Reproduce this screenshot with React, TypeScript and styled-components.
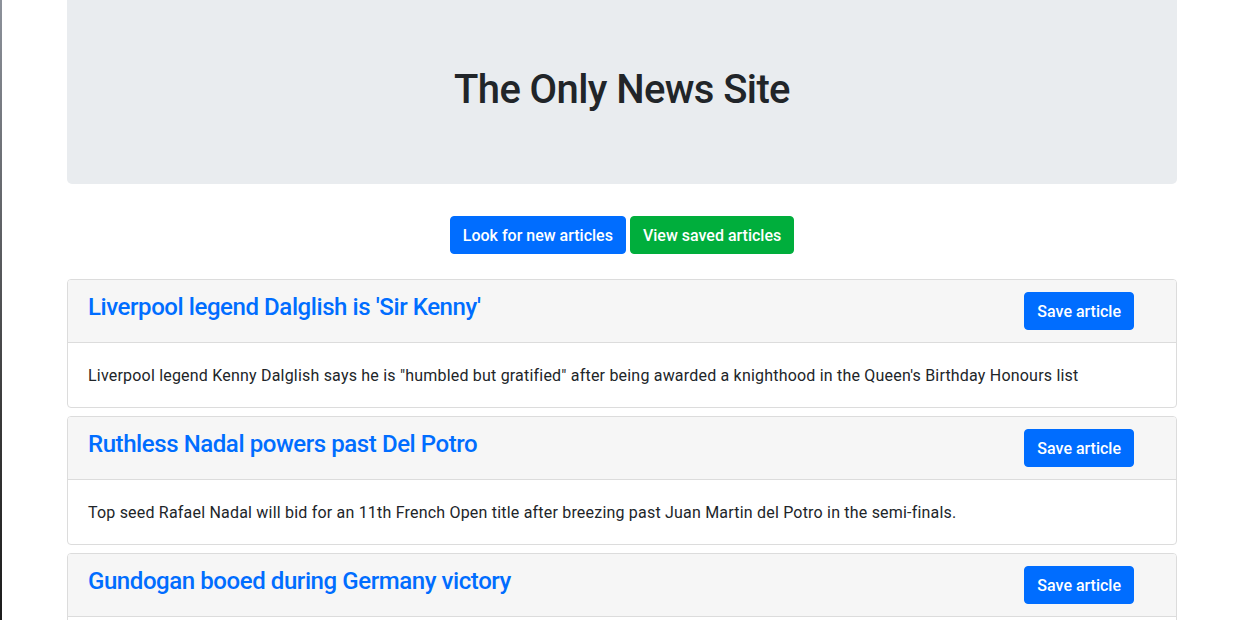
import React from "react";
import styled, { createGlobalStyle } from "styled-components";

const Global = createGlobalStyle`
  html, body { margin: 0; padding: 0; }
  body {
    font-family: Roboto, "Helvetica Neue", Arial, sans-serif;
    color: #212529;
    font-size: 16px;
    line-height: 1.5;
    background: linear-gradient(to bottom, #8d929b, #3a3a3a 60%, #111) left top / 2px 100% no-repeat, #fff;
  }
`;

const Container = styled.div`
  width: 1110px;
  margin: 0 auto;
  padding: 0 15px;
  transform: translateX(1px);
`;

const Jumbotron = styled.header`
  background: #e9ecef;
  border-radius: 0 0 5px 5px;
  padding: 66px 32px 62px;
  margin-bottom: 32px;
  text-align: center;
`;

const Title = styled.h1`
  margin: 0 0 8px;
  font-size: 40px;
  font-weight: 500;
  line-height: 48px;
  letter-spacing: -0.6px;
  color: #212529;
`;

const Actions = styled.div`
  display: flex;
  justify-content: center;
  gap: 4px;
  margin-bottom: 25px;
`;

const Button = styled.button<{ $variant?: "primary" | "success" }>`
  font-family: inherit;
  font-size: 16px;
  font-weight: 500;
  line-height: 24px;
  padding: 7px 12px 5px;
  border: 1px solid ${(p) => (p.$variant === "success" ? "#00ae3c" : "#006dff")};
  background: ${(p) => (p.$variant === "success" ? "#00ae3c" : "#006dff")};
  color: #fff;
  border-radius: 4px;
  cursor: pointer;
`;

const Card = styled.article`
  border: 1px solid #dcdcdc;
  border-radius: 4px;
  margin-bottom: 8px;
  overflow: hidden;
`;

const CardHeader = styled.div`
  display: flex;
  justify-content: space-between;
  align-items: flex-start;
  padding: 12px 42px 12px 20px;
  background: #f6f6f6;
  border-bottom: 1px solid #dcdcdc;
`;

const Headline = styled.h4`
  margin: 1px 0 0;
  font-size: 24px;
  font-weight: 500;
  line-height: 29px;
  letter-spacing: -0.42px;
  color: #006dff;
`;

const CardBody = styled.div`
  padding: 21px 20px 19px;
  font-size: 16px;
  line-height: 24px;
  letter-spacing: 0.2px;
`;

const articles = [
  {
    title: "Liverpool legend Dalglish is 'Sir Kenny'",
    summary:
      'Liverpool legend Kenny Dalglish says he is "humbled but gratified" after being awarded a knighthood in the Queen\'s Birthday Honours list',
  },
  {
    title: "Ruthless Nadal powers past Del Potro",
    summary:
      "Top seed Rafael Nadal will bid for an 11th French Open title after breezing past Juan Martin del Potro in the semi-finals.",
  },
  {
    title: "Gundogan booed during Germany victory",
    summary:
      "Manchester City midfielder Ilkay Gundogan is booed by Germany fans during their win over Saudi Arabia.",
  },
];

export default function App() {
  return (
    <>
      <Global />
      <Container>
        <Jumbotron>
          <Title>The Only News Site</Title>
        </Jumbotron>
        <Actions>
          <Button>Look for new articles</Button>
          <Button $variant="success">View saved articles</Button>
        </Actions>
        {articles.map((a) => (
          <Card key={a.title}>
            <CardHeader>
              <Headline>{a.title}</Headline>
              <Button>Save article</Button>
            </CardHeader>
            <CardBody>{a.summary}</CardBody>
          </Card>
        ))}
      </Container>
    </>
  );
}
